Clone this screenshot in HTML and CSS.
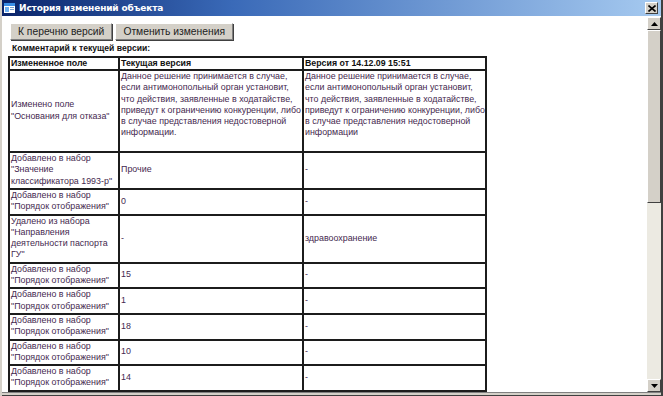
FILE: index.html
```html
<!DOCTYPE html>
<html lang="ru">
<head>
<meta charset="utf-8">
<title>История изменений объекта</title>
<link rel="stylesheet" href="styles.css">
</head>
<body>
<div class="window">
  <div class="titlebar">
    <div class="title-left">
      <svg class="app-icon" width="11" height="10" viewBox="0 0 11 10">
        <rect x="0" y="0" width="11" height="10" fill="#ffffff"/>
        <rect x="0" y="0" width="11" height="3" fill="#3a8ee6"/>
        <rect x="1" y="4" width="4" height="5" fill="#6fb0f0"/>
        <rect x="6" y="4" width="4" height="1" fill="#7aa0d0"/>
        <rect x="6" y="6" width="4" height="1" fill="#7aa0d0"/>
      </svg>
      <span class="title-text">История изменений объекта</span>
    </div>
    <div class="close-btn">
      <svg width="8" height="7" viewBox="0 0 8 7"><path d="M0.5 0.5 L7.5 6.5 M7.5 0.5 L0.5 6.5" stroke="#000" stroke-width="1.6"/></svg>
    </div>
  </div>
  <div class="body">
    <div class="content">
      <div class="toolbar">
        <button class="btn">К перечню версий</button>
        <button class="btn">Отменить изменения</button>
      </div>
      <div class="comment">Комментарий к текущей версии:</div>
      <table class="grid">
        <colgroup>
          <col class="c1"><col class="c2"><col class="c3">
        </colgroup>
        <thead>
          <tr><th>Измененное поле</th><th>Текущая версия</th><th>Версия от 14.12.09 15:51</th></tr>
        </thead>
        <tbody>
          <tr>
            <td>Изменено поле<br>"Основания для отказа"</td>
            <td class="top">Данное решение принимается в случае,<br>если антимонопольный орган установит,<br>что действия, заявленные в ходатайстве,<br>приведут к ограничению конкуренции, либо<br>в случае представления недостоверной<br>информации.<br>&nbsp;</td>
            <td class="top">Данное решение принимается в случае,<br>если антимонопольный орган установит,<br>что действия, заявленные в ходатайстве,<br>приведут к ограничению конкуренции, либо<br>в случае представления недостоверной<br>информации<br>&nbsp;</td>
          </tr>
          <tr><td>Добавлено в набор<br>"Значение<br>классификатора 1993-р"</td><td>Прочие</td><td>-</td></tr>
          <tr><td>Добавлено в набор<br>"Порядок отображения"</td><td>0</td><td>-</td></tr>
          <tr><td>Удалено из набора<br>"Направления<br>деятельности паспорта<br>ГУ"</td><td>-</td><td>здравоохранение</td></tr>
          <tr><td>Добавлено в набор<br>"Порядок отображения"</td><td>15</td><td>-</td></tr>
          <tr><td>Добавлено в набор<br>"Порядок отображения"</td><td>1</td><td>-</td></tr>
          <tr><td>Добавлено в набор<br>"Порядок отображения"</td><td>18</td><td>-</td></tr>
          <tr><td>Добавлено в набор<br>"Порядок отображения"</td><td>10</td><td>-</td></tr>
          <tr><td>Добавлено в набор<br>"Порядок отображения"</td><td>14</td><td>-</td></tr>
        </tbody>
      </table>
    </div>
    <div class="vscroll">
      <div class="sb-btn"><svg width="7" height="4" viewBox="0 0 7 4"><path d="M3.5 0 L7 4 L0 4 Z" fill="#000"/></svg></div>
      <div class="sb-thumb"></div>
      <div class="sb-track"></div>
      <div class="sb-btn"><svg width="7" height="4" viewBox="0 0 7 4"><path d="M0 0 L7 0 L3.5 4 Z" fill="#000"/></svg></div>
    </div>
  </div>
  <div class="bottom-frame"></div>
</div>
</body>
</html>
```

FILE: styles.css
```css
* { box-sizing: border-box; }
html, body { margin: 0; padding: 0; }
body {
  width: 663px;
  height: 396px;
  overflow: hidden;
  background: #d4d0c8;
  font-family: "Liberation Sans", Arial, sans-serif;
}
.window {
  width: 663px;
  height: 396px;
  display: flex;
  flex-direction: column;
  border-right: 2px solid #404040;
  border-left: 2px solid #d4d0c8;
  background: #d4d0c8;
}
.titlebar {
  height: 16px;
  flex: none;
  display: flex;
  align-items: center;
  justify-content: space-between;
  padding: 0 3px 0 2px;
  background: linear-gradient(to right, #0a246a 0%, #3a6ab8 35%, #a6caf0 100%);
}
.title-left { display: flex; align-items: center; gap: 4px; }
.app-icon { display: block; }
.title-text {
  color: #fff;
  font-weight: bold;
  font-size: 9px;
  font-family: "DejaVu Sans", Tahoma, sans-serif;
  letter-spacing: -0.15px;
}
.close-btn {
  width: 13px;
  height: 12px;
  background: #d4d0c8;
  border: 1px solid;
  border-color: #ffffff #404040 #404040 #ffffff;
  display: flex;
  align-items: center;
  justify-content: center;
}
.close-btn svg { display: block; }
.body {
  flex: 1;
  display: flex;
  min-height: 0;
  background: #fff;
  border-top: 1px solid #fff;
}
.content {
  flex: 1;
  overflow: hidden;
  padding: 6px 0 0 6px;
  background: #fff;
}
.toolbar { display: flex; gap: 3px; padding-left: 2px; }
.btn {
  height: 17px;
  padding: 0 7px;
  margin: 0;
  font-family: "Liberation Sans", Arial, sans-serif;
  font-size: 10.3px;
  color: #222;
  background: #d4d0c8;
  border: 1px solid;
  border-color: #ffffff #808080 #808080 #ffffff;
  box-shadow: 1px 1px 0 #404040;
}
.comment {
  font-weight: bold;
  font-size: 8.6px;
  padding: 3px 0 0 4px;
  height: 16px;
  color: #111;
}
.grid {
  border-collapse: collapse;
  table-layout: fixed;
  width: 477px;
  font-size: 8.9px;
  line-height: 11.3px;
}
.c1 { width: 110px; }
.c2 { width: 184px; }
.c3 { width: 183px; }
.grid th, .grid td {
  border: 2px solid #1c1c1c;
  padding: 0 0 1px 1px;
  vertical-align: middle;
  text-align: left;
  white-space: nowrap;
  overflow: hidden;
}
.grid th {
  font-weight: bold;
  color: #111;
  font-size: 8.8px;
  line-height: 10px;
}
.grid td { color: #45294f; }
.grid td.top { vertical-align: top; }
.vscroll {
  width: 14px;
  flex: none;
  display: flex;
  flex-direction: column;
  background: #ecebe4;
}
.sb-btn {
  height: 13px;
  flex: none;
  background: #d4d0c8;
  border: 1px solid;
  border-color: #ffffff #404040 #404040 #ffffff;
  display: flex;
  align-items: center;
  justify-content: center;
}
.sb-btn svg { display: block; }
.sb-thumb {
  height: 173px;
  flex: none;
  background: #d4d0c8;
  border: 1px solid;
  border-color: #ffffff #404040 #404040 #ffffff;
}
.sb-track { flex: 1; background: #eceae2; }
.bottom-frame {
  height: 4px;
  flex: none;
  background: #d4d0c8;
  border-top: 1px solid #808080;
  border-bottom: 1px solid #404040;
}
```
